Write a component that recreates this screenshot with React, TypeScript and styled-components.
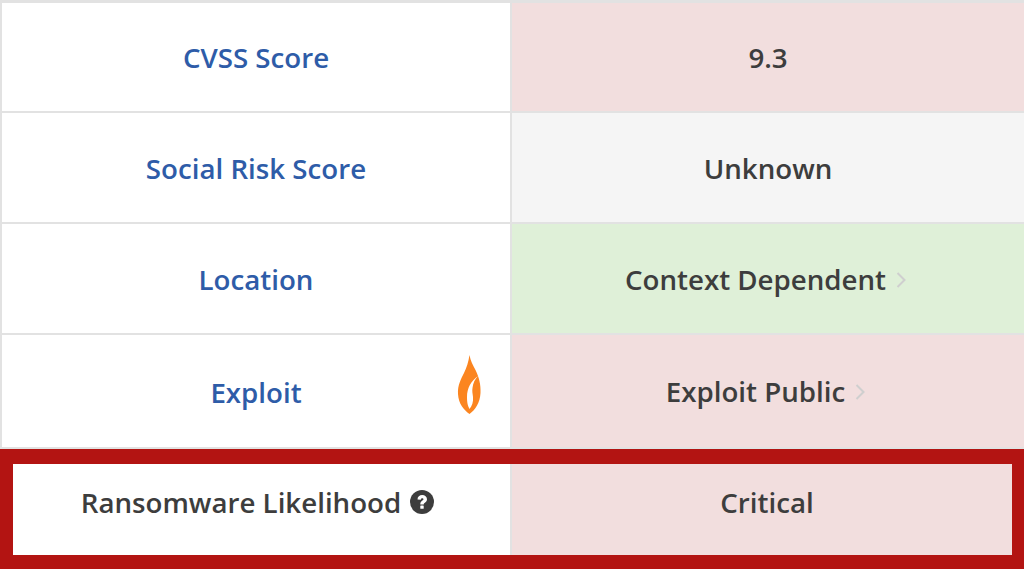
import React from 'react';
import styled, { createGlobalStyle } from 'styled-components';

const GlobalStyle = createGlobalStyle`
  html, body {
    margin: 0;
    padding: 0;
    background: #ffffff;
  }
`;

const Page = styled.div`
  width: 1024px;
  height: 569px;
  overflow: hidden;
  display: flex;
  flex-direction: column;
  font-family: 'Open Sans', 'Noto Sans', sans-serif;
  font-size: 27.7px;
  font-weight: 600;
  color: #3d3d3d;
`;

const Rows = styled.div`
  display: flex;
  flex-direction: column;
  border-top: 3px solid #e2e2e2;
  border-left: 2px solid #e2e2e2;
`;

const Row = styled.div<{ $height: number }>`
  display: grid;
  grid-template-columns: 510px 1fr;
  height: ${props => props.$height}px;
  border-bottom: 2px solid #e2e2e2;
  box-sizing: border-box;
`;

const LabelCell = styled.div<{ $nudge?: number }>`
  position: relative;
  display: flex;
  align-items: center;
  justify-content: center;
  padding-top: ${props => props.$nudge || 0}px;
  background: #ffffff;
  color: #2e5ca8;
  border-right: 2px solid #e2e2e2;
`;

const ValueCell = styled.div<{ $tone: 'red' | 'grey' | 'green'; $more?: boolean }>`
  display: flex;
  align-items: center;
  justify-content: center;
  gap: 10px;
  padding-right: ${props => (props.$more ? 5 : 0)}px;
  background: ${props =>
    props.$tone === 'red' ? '#f2dede' : props.$tone === 'green' ? '#dff0d8' : '#f5f5f5'};
`;

const FlameBadge = styled.svg`
  position: absolute;
  left: 455px;
  top: 20px;
  width: 24px;
  height: 60px;
`;

const Highlight = styled.div`
  flex: 1;
  display: grid;
  grid-template-columns: 499px 1fr;
  border-style: solid;
  border-color: #b31412;
  border-width: 15px 12px 14px 13px;
`;

const HighlightLabel = styled.div`
  display: flex;
  align-items: center;
  justify-content: center;
  gap: 9px;
  padding: 0 8px 16px 0;
  background: #ffffff;
  border-right: 2px solid #e2e2e2;
`;

const HighlightValue = styled(ValueCell)`
  padding: 0 0 16px 10px;
`;

const HelpIcon = styled.svg`
  width: 24px;
  height: 24px;
  margin-top: 1px;
`;

const Chevron = styled.svg`
  width: 10px;
  height: 18px;
  margin-top: 2px;
`;

const More = () => (
  <Chevron viewBox="0 0 10 18">
    <path d="M1.5 2 L8.5 9 L1.5 16" fill="none" stroke="#cfcfcf" strokeWidth="2" />
  </Chevron>
);

const App: React.FC = () => {
  return (
    <Page>
      <GlobalStyle />
      <Rows>
        <Row $height={110}>
          <LabelCell>CVSS Score</LabelCell>
          <ValueCell $tone="red">9.3</ValueCell>
        </Row>
        <Row $height={111}>
          <LabelCell>Social Risk Score</LabelCell>
          <ValueCell $tone="grey">Unknown</ValueCell>
        </Row>
        <Row $height={111}>
          <LabelCell>Location</LabelCell>
          <ValueCell $tone="green" $more>
            Context Dependent
            <More />
          </ValueCell>
        </Row>
        <Row $height={114}>
          <LabelCell $nudge={2}>
            Exploit
            <FlameBadge viewBox="0 0 24 60">
              <path
                d="M12.5 0 C13.5 6 16 10 18.5 15 C22 22 24 30 23.5 38 C23 48 18 55 12.5 59 C7 55 1.5 49 1 39 C0.5 30 4 24 7 18 C9.5 13 11.5 7 12.5 0 Z"
                fill="#fb8520"
              />
              <path
                d="M21 21 C14 26 10 33 10 42 C10 48 11 51 12.5 54 C15 51 16.5 47 16 42 C15.5 38 15 36 15.5 33 C16 28 18 24 21 21 Z"
                fill="#ffffff"
              />
            </FlameBadge>
          </LabelCell>
          <ValueCell $tone="red" $more>
            Exploit Public
            <More />
          </ValueCell>
        </Row>
      </Rows>
      <Highlight>
        <HighlightLabel>
          Ransomware Likelihood
          <HelpIcon viewBox="0 0 24 24">
            <circle cx="12" cy="12" r="12" fill="#3d3d3d" />
            <path
              d="M7.5 9.5 C7.5 6.6 9.6 5 12.2 5 C14.9 5 17 6.7 17 9.2 C17 11.2 15.8 12.1 14.6 12.9 C13.9 13.4 13.7 13.7 13.7 14.6 L10.3 14.6 C10.3 12.6 10.8 11.6 12.1 10.8 C13 10.2 13.4 9.9 13.4 9.3 C13.4 8.7 12.9 8.3 12.2 8.3 C11.3 8.3 10.9 8.9 10.8 9.8 Z"
              fill="#ffffff"
            />
            <rect x="10.3" y="15.6" width="3.4" height="3.2" rx="0.5" fill="#ffffff" />
          </HelpIcon>
        </HighlightLabel>
        <HighlightValue $tone="red">Critical</HighlightValue>
      </Highlight>
    </Page>
  );
};

export default App;
